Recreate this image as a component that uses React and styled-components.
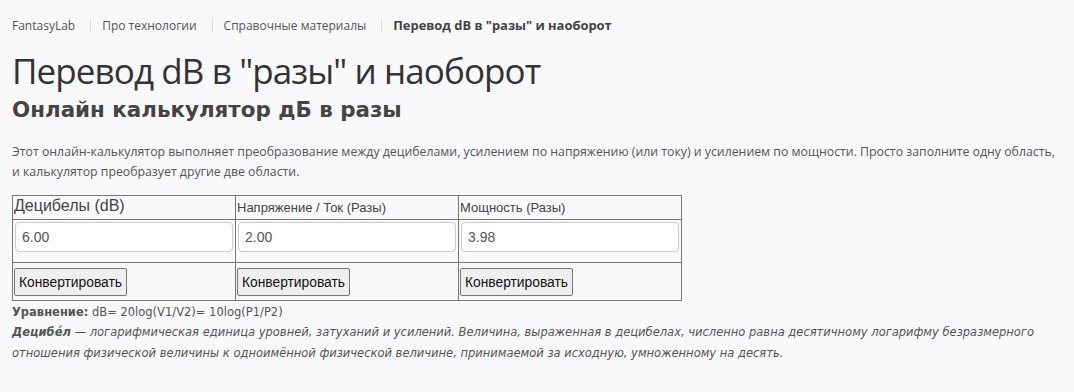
import React from "react";
import styled, { createGlobalStyle } from "styled-components";

const Global = createGlobalStyle`
  html, body { margin: 0; padding: 0; background: #f9f9fc; }
  body { font-family: "Open Sans", "DejaVu Sans", sans-serif; color: #444; }
`;

const Page = styled.div`
  padding: 0 12px;
`;

const Breadcrumbs = styled.nav`
  display: flex;
  align-items: center;
  height: 50px;
  font-family: "Open Sans", sans-serif;
  color: #555;
`;

const Crumb = styled.span`
  font-size: ${(p) => (p.$current ? "12.9px" : "12px")};
  font-weight: ${(p) => (p.$current ? 700 : 400)};
  color: ${(p) => (p.$current ? "#444" : "#555")};
`;

const Sep = styled.span`
  display: inline-block;
  width: 1px;
  height: 15px;
  background: #ddd;
  margin: 0 11px 0 15px;
`;

const Title = styled.h1`
  margin: 0;
  font-family: "Open Sans", sans-serif;
  font-weight: 400;
  font-size: 35px;
  letter-spacing: -0.9px;
  line-height: 42px;
  color: #333;
`;

const Subtitle = styled.h2`
  margin: 3px 0 0;
  font-family: "DejaVu Sans", sans-serif;
  font-weight: 700;
  font-size: 21.4px;
  line-height: 30px;
  color: #444;
`;

const Intro = styled.p`
  margin: 17px 0 13px;
  font-family: "Open Sans", sans-serif;
  font-size: 12.3px;
  line-height: 20px;
  color: #555;
`;

const Table = styled.table`
  border-collapse: collapse;
  width: 670px;
  font-family: "Liberation Sans", Arial, sans-serif;
  table-layout: fixed;
`;

const Row = styled.tr`
  height: ${(p) => p.$h};
`;

const Cell = styled.td`
  border: 1px solid #777;
  padding: ${(p) => p.$pad || "2px"};
  vertical-align: top;
  font-size: ${(p) => (p.$big ? "16px" : "13px")};
  color: #444;
`;

const Input = styled.input`
  box-sizing: border-box;
  display: block;
  width: 100%;
  height: 30px;
  padding: 4px 6px;
  border: 1px solid #ccc;
  border-radius: 4px;
  background: #fff;
  font-family: "Liberation Sans", Arial, sans-serif;
  font-size: 14px;
  color: #555;
`;

const Button = styled.button`
  display: block;
  height: 28px;
  padding: 0 4px;
  border: 1px solid #767676;
  border-radius: 2px;
  background: #efefef;
  font-family: "Liberation Sans", Arial, sans-serif;
  font-size: 13.8px;
  color: #111;
`;

const Note = styled.div`
  font-family: "DejaVu Sans", sans-serif;
  font-size: 11.5px;
  line-height: 20px;
  color: #555;
  margin-top: 1px;
`;

const Def = styled.div`
  font-family: "DejaVu Sans", sans-serif;
  font-size: 11.5px;
  font-style: italic;
  line-height: 21px;
  color: #555;
`;

const cols = [
  { label: "Децибелы (dB)", big: true, value: "6.00" },
  { label: "Напряжение / Ток (Разы)", value: "2.00" },
  { label: "Мощность (Разы)", value: "3.98" },
];

export default function App() {
  return (
    <>
      <Global />
      <Page>
        <Breadcrumbs>
          <Crumb>FantasyLab</Crumb>
          <Sep />
          <Crumb>Про технологии</Crumb>
          <Sep />
          <Crumb>Справочные материалы</Crumb>
          <Sep />
          <Crumb $current>Перевод dB в "разы" и наоборот</Crumb>
        </Breadcrumbs>
        <Title>Перевод dB в "разы" и наоборот</Title>
        <Subtitle>Онлайн калькулятор дБ в разы</Subtitle>
        <Intro>
          Этот онлайн-калькулятор выполняет преобразование между децибелами, усилением по напряжению (или току) и
          усилением по мощности. Просто заполните одну область, и калькулятор преобразует другие две области.
        </Intro>
        <Table>
          <tbody>
            <Row $h="24px">
              {cols.map((c) => (
                <Cell key={c.label} $big={c.big} $pad={c.big ? "1px 1px 0" : "4px 1px 2px"}>
                  {c.label}
                </Cell>
              ))}
            </Row>
            <Row $h="43px">
              {cols.map((c) => (
                <Cell key={c.label}>
                  <Input defaultValue={c.value} />
                </Cell>
              ))}
            </Row>
            <Row $h="38px">
              {cols.map((c) => (
                <Cell key={c.label} $pad="5px 1px 3px">
                  <Button>Конвертировать</Button>
                </Cell>
              ))}
            </Row>
          </tbody>
        </Table>
        <Note>
          <b>Уравнение:</b> dB= 20log(V1/V2)= 10log(P1/P2)
        </Note>
        <Def>
          <b>Децибе́л</b> — логарифмическая единица уровней, затуханий и усилений. Величина, выраженная в децибелах,
          численно равна десятичному логарифму безразмерного отношения физической величины к одноимённой физической
          величине, принимаемой за исходную, умноженному на десять.
        </Def>
      </Page>
    </>
  );
}
